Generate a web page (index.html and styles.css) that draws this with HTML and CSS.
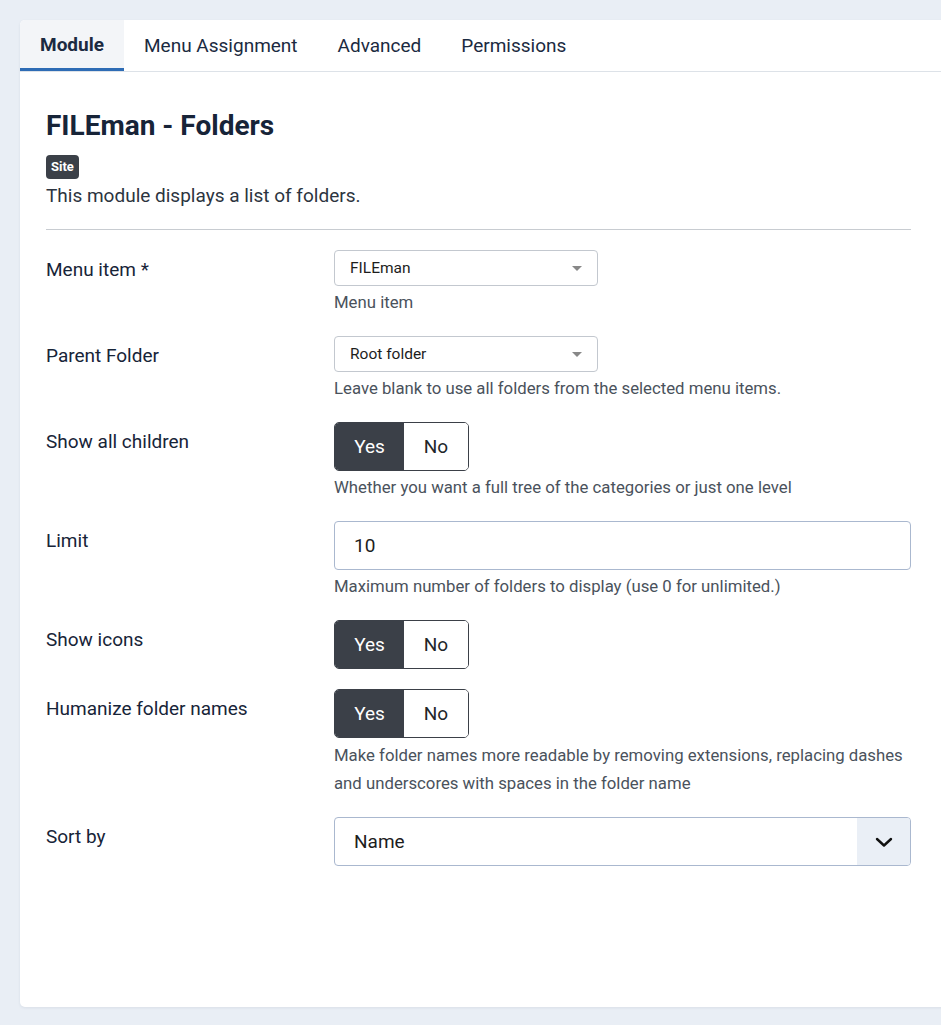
FILE: index.html
```html
<!DOCTYPE html>
<html lang="en">
<head>
<meta charset="utf-8">
<title>FILEman - Folders</title>
<link rel="stylesheet" href="styles.css">
</head>
<body>
<div class="card">
  <nav class="tabs">
    <div class="tab active">Module</div>
    <div class="tab">Menu Assignment</div>
    <div class="tab">Advanced</div>
    <div class="tab">Permissions</div>
  </nav>
  <div class="content">
    <h1 class="title">FILEman - Folders</h1>
    <div class="badge-wrap"><span class="badge">Site</span></div>
    <p class="intro">This module displays a list of folders.</p>
    <hr class="sep">

    <div class="row">
      <div class="label">Menu item *</div>
      <div class="control">
        <div class="select-sm"><span>FILEman</span><span class="tri"></span></div>
        <div class="help">Menu item</div>
      </div>
    </div>

    <div class="row">
      <div class="label">Parent Folder</div>
      <div class="control">
        <div class="select-sm"><span>Root folder</span><span class="tri"></span></div>
        <div class="help">Leave blank to use all folders from the selected menu items.</div>
      </div>
    </div>

    <div class="row">
      <div class="label">Show all children</div>
      <div class="control">
        <div class="toggle"><span class="yes">Yes</span><span class="no">No</span></div>
        <div class="help">Whether you want a full tree of the categories or just one level</div>
      </div>
    </div>

    <div class="row">
      <div class="label">Limit</div>
      <div class="control">
        <div class="input">10</div>
        <div class="help">Maximum number of folders to display (use 0 for unlimited.)</div>
      </div>
    </div>

    <div class="row">
      <div class="label">Show icons</div>
      <div class="control">
        <div class="toggle"><span class="yes">Yes</span><span class="no">No</span></div>
      </div>
    </div>

    <div class="row">
      <div class="label">Humanize folder names</div>
      <div class="control">
        <div class="toggle"><span class="yes">Yes</span><span class="no">No</span></div>
        <div class="help help-wide">Make folder names more readable by removing extensions, replacing dashes and underscores with spaces in the folder name</div>
      </div>
    </div>

    <div class="row">
      <div class="label">Sort by</div>
      <div class="control">
        <div class="select-lg">
          <span class="val">Name</span>
          <span class="caret"><svg width="18" height="12" viewBox="0 0 18 12"><path d="M2 3 L9 9.5 L16 3" fill="none" stroke="#111" stroke-width="2.4" stroke-linecap="round" stroke-linejoin="round"/></svg></span>
        </div>
      </div>
    </div>
  </div>
</div>
</body>
</html>
```

FILE: styles.css
```css
html, body {
  margin: 0;
  padding: 0;
  overflow: hidden;
}
body {
  background: #e9eef5;
  font-family: Roboto, "Liberation Sans", sans-serif;
  color: #1b2a41;
  height: 1025px;
}
.card {
  margin: 20px 0 0 20px;
  width: 960px;
  min-height: 987px;
  background: #fff;
  border-radius: 5px;
  box-shadow: 0 1px 3px rgba(30, 50, 80, 0.08);
}
.tabs {
  display: flex;
  height: 52px;
  border-bottom: 1px solid #dde2e8;
  box-sizing: border-box;
}
.tab {
  padding: 0 20px;
  font-size: 19px;
  line-height: 52px;
  color: #1b2a41;
  box-sizing: border-box;
}
.tab.active {
  font-weight: 700;
  background: #f3f5f8;
  border-bottom: 3px solid #2e6cb5;
  line-height: 50px;
  border-top-left-radius: 5px;
}
.content {
  padding: 36px 50px 40px 26px;
}
.title {
  margin: 0;
  font-size: 28px;
  line-height: 36px;
  font-weight: 700;
  color: #172438;
}
.badge-wrap {
  margin-top: 11px;
  height: 24px;
}
.badge {
  display: inline-block;
  background: #3b4048;
  color: #fff;
  font-size: 13px;
  font-weight: 700;
  line-height: 24px;
  padding: 0 5px;
  border-radius: 4px;
  vertical-align: top;
}
.intro {
  margin: 4px 0 0;
  font-size: 19px;
  line-height: 26px;
  color: #2c3440;
}
.sep {
  margin: 20px 0 20px;
  border: 0;
  border-top: 1px solid #c8ccd1;
  width: 865px;
}
.row {
  display: flex;
  margin-bottom: 20px;
  width: 865px;
}
.label {
  width: 288px;
  flex: none;
  font-size: 19px;
  line-height: 24px;
  padding-top: 8px;
  color: #172438;
}
.control {
  flex: 1;
}
.select-sm {
  width: 264px;
  height: 36px;
  box-sizing: border-box;
  border: 1px solid #c3c8cf;
  border-radius: 4px;
  display: flex;
  align-items: center;
  justify-content: space-between;
  padding: 0 15px 0 15px;
  font-size: 15.5px;
  color: #1d1d1d;
}
.tri {
  width: 0;
  height: 0;
  border-left: 5px solid transparent;
  border-right: 5px solid transparent;
  border-top: 5px solid #888;
}
.help {
  margin-top: 2px;
  font-size: 16.75px;
  line-height: 28px;
  color: #4a525c;
}
.help-wide {
  margin-top: 3px;
}
.toggle {
  display: inline-flex;
  height: 49px;
  border: 1px solid #3b4048;
  border-radius: 5px;
  overflow: hidden;
  box-sizing: border-box;
  font-size: 19px;
}
.toggle span {
  display: flex;
  align-items: center;
  justify-content: center;
}
.toggle .yes {
  width: 69px;
  background: #3b4048;
  color: #fff;
}
.toggle .no {
  width: 64px;
  background: #fff;
  color: #22262a;
}
.input {
  height: 49px;
  box-sizing: border-box;
  border: 1px solid #aab8cf;
  border-radius: 4px;
  padding: 0 19px;
  display: flex;
  align-items: center;
  font-size: 19px;
  color: #1d1d1d;
}
.select-lg {
  height: 49px;
  box-sizing: border-box;
  border: 1px solid #aab8cf;
  border-radius: 4px;
  display: flex;
  align-items: stretch;
  overflow: hidden;
  font-size: 19px;
  color: #1d1d1d;
}
.select-lg .val {
  flex: 1;
  display: flex;
  align-items: center;
  padding: 0 19px;
}
.select-lg .caret {
  width: 53px;
  background: #eaeff6;
  display: flex;
  align-items: center;
  justify-content: center;
}
```
